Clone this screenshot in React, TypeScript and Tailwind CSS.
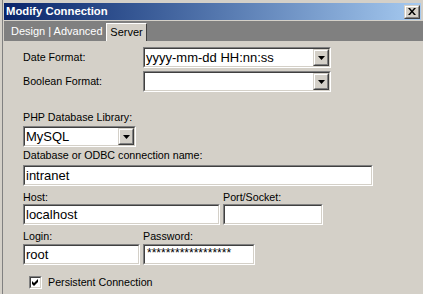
import React from 'react';

const font = { fontFamily: '"Liberation Sans", Arial, sans-serif' };

function Sunken({ className, children }: { className?: string; children?: React.ReactNode }) {
  return (
    <div className={`border border-t-[#808080] border-l-[#808080] border-b-white border-r-white ${className ?? ''}`}>
      <div className="h-full w-full border border-t-[#404040] border-l-[#404040] border-b-[#d4d0c8] border-r-[#d4d0c8] bg-white flex items-center overflow-hidden">
        {children}
      </div>
    </div>
  );
}

function Raised({ className, children }: { className?: string; children?: React.ReactNode }) {
  return (
    <div className={`border border-t-[#d4d0c8] border-l-[#d4d0c8] border-b-[#404040] border-r-[#404040] ${className ?? ''}`}>
      <div className="h-full w-full border border-t-white border-l-white border-b-[#808080] border-r-[#808080] bg-[#d4d0c8] flex items-center justify-center">
        {children}
      </div>
    </div>
  );
}

function Select({ value, className }: { value?: string; className: string }) {
  return (
    <Sunken className={className}>
      <span className="flex-1 pl-[1px] text-[13px] text-black whitespace-nowrap">{value}</span>
      <Raised className="w-[16px] h-full shrink-0">
        <svg width="7" height="4" viewBox="0 0 7 4">
          <path d="M0 0h7L3.5 4z" fill="#000" />
        </svg>
      </Raised>
    </Sunken>
  );
}

function Field({ value, className }: { value?: string; className: string }) {
  return (
    <Sunken className={className}>
      <span className="pl-[1px] text-[13px] text-black whitespace-nowrap">{value}</span>
    </Sunken>
  );
}

function Label({ children, className }: { children: React.ReactNode; className?: string }) {
  return <div className={`text-[10.7px] leading-[13px] text-black whitespace-nowrap ${className ?? ''}`}>{children}</div>;
}

export default function App() {
  return (
    <div className="w-[423px] h-[294px] bg-[#d4d0c8] overflow-hidden pl-[2px]" style={font}>
      <div className="h-full border-l border-[#808080] pl-[1px] pt-[3px] flex flex-col">
        {/* title bar */}
        <div className="h-[17px] mr-[2px] flex items-center justify-between bg-gradient-to-r from-[#0a246a] to-[#a6caf0]">
          <span className="pl-[2px] text-[11.3px] font-bold text-white">Modify Connection</span>
          <Raised className="w-[16px] h-[14px] mr-[1px]">
            <svg width="8" height="7" viewBox="0 0 8 7">
              <path d="M0 0h2l2 2.5L6 0h2L5 3.5 8 7H6L4 4.5 2 7H0l3-3.5z" fill="#000" />
            </svg>
          </Raised>
        </div>
        <div className="h-[1px]" />

        {/* tabs */}
        <div className="h-[20px] bg-[#808080] flex items-end">
          <span className="w-[102px] pl-[7px] self-center text-[11px] text-white whitespace-nowrap">Design | Advanced</span>
          <div className="w-[41px] h-[18px] bg-[#d4d0c8] border-l border-t border-white border-r border-r-[#404040] flex items-center justify-center text-[11px] text-black">
            Server
          </div>
        </div>

        {/* panel */}
        <div className="flex-1 pl-[19px] flex flex-col">
          <div className="mt-[6px] flex items-center">
            <Label className="w-[120px]">Date Format:</Label>
            <Select value="yyyy-mm-dd HH:nn:ss" className="w-[188px] h-[21px]" />
          </div>
          <div className="mt-[3px] flex items-center">
            <Label className="w-[120px]">Boolean Format:</Label>
            <Select className="w-[188px] h-[21px]" />
          </div>

          <Label className="mt-[19px]">PHP Database Library:</Label>
          <Select value="MySQL" className="mt-[2px] w-[113px] h-[21px]" />

          <Label className="mt-[2px]">Database or ODBC connection name:</Label>
          <Field value="intranet" className="mt-[3px] w-[350px] h-[21px]" />

          <div className="mt-[5px] flex gap-[3px]">
            <div className="flex flex-col">
              <Label>Host:</Label>
              <Field value="localhost" className="w-[197px] h-[21px]" />
            </div>
            <div className="flex flex-col">
              <Label>Port/Socket:</Label>
              <Field className="w-[100px] h-[21px]" />
            </div>
          </div>

          <div className="mt-[5px] flex gap-[3px]">
            <div className="flex flex-col">
              <Label>Login:</Label>
              <Field value="root" className="mt-[1px] w-[117px] h-[21px]" />
            </div>
            <div className="flex flex-col">
              <Label>Password:</Label>
              <Sunken className="mt-[1px] w-[112px] h-[21px]">
                <span className="pl-[2px] self-start text-[12px] leading-[14px] text-black">******************</span>
              </Sunken>
            </div>
          </div>

          <div className="mt-[11px] ml-[6px] flex items-center gap-[6px]">
            <Sunken className="w-[13px] h-[13px]">
              <svg width="9" height="9" viewBox="0 0 9 9">
                <path d="M1 3L3 5L7 1V4L3 8L1 6Z" fill="#000" />
              </svg>
            </Sunken>
            <Label>Persistent Connection</Label>
          </div>
        </div>
      </div>
    </div>
  );
}
